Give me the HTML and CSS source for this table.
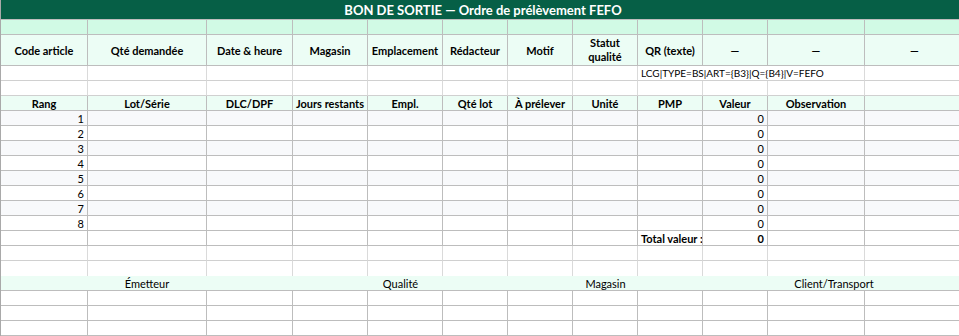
FILE: index.html
```html
<!DOCTYPE html>
<html lang="fr">
<head>
    <meta charset="UTF-8">
    <title>Bon de sortie FEFO</title>
    <link rel="stylesheet" href="styles.css">
</head>
<body>
    <div class="sheet">
        <!-- titre -->
        <div class="cell title">BON DE SORTIE — Ordre de prélèvement FEFO</div>

        <div class="cell band"></div><div class="cell band"></div><div class="cell band"></div><div class="cell band"></div>
        <div class="cell band"></div><div class="cell band"></div><div class="cell band"></div><div class="cell band"></div>
        <div class="cell band"></div><div class="cell band"></div><div class="cell band"></div><div class="cell band"></div>

        <!-- en-tête du bon -->
        <div class="cell head">Code article</div>
        <div class="cell head">Qté demandée</div>
        <div class="cell head">Date &amp; heure</div>
        <div class="cell head">Magasin</div>
        <div class="cell head">Emplacement</div>
        <div class="cell head">Rédacteur</div>
        <div class="cell head">Motif</div>
        <div class="cell head wrap">Statut<br>qualité</div>
        <div class="cell head">QR (texte)</div>
        <div class="cell head">—</div>
        <div class="cell head">—</div>
        <div class="cell head">—</div>

        <div class="cell plain"></div><div class="cell plain"></div><div class="cell plain"></div><div class="cell plain"></div>
        <div class="cell plain"></div><div class="cell plain"></div><div class="cell plain"></div><div class="cell plain"></div>
        <div class="cell plain left qr">LCG|TYPE=BS|ART={B3}|Q={B4}|V=FEFO</div>
        <div class="cell plain"></div>

        <div class="cell plain"></div><div class="cell plain"></div><div class="cell plain"></div><div class="cell plain"></div>
        <div class="cell plain"></div><div class="cell plain"></div><div class="cell plain"></div><div class="cell plain"></div>
        <div class="cell plain"></div><div class="cell plain"></div><div class="cell plain"></div><div class="cell plain"></div>

        <!-- lignes de lots -->
        <div class="cell head">Rang</div>
        <div class="cell head">Lot/Série</div>
        <div class="cell head">DLC/DPF</div>
        <div class="cell head">Jours restants</div>
        <div class="cell head">Empl.</div>
        <div class="cell head">Qté lot</div>
        <div class="cell head">À prélever</div>
        <div class="cell head">Unité</div>
        <div class="cell head">PMP</div>
        <div class="cell head">Valeur</div>
        <div class="cell head">Observation</div>
        <div class="cell head"></div>

        <div class="cell num odd">1</div><div class="cell odd"></div><div class="cell odd"></div><div class="cell odd"></div><div class="cell odd"></div><div class="cell odd"></div><div class="cell odd"></div><div class="cell odd"></div><div class="cell odd"></div><div class="cell num odd">0</div><div class="cell odd"></div><div class="cell odd"></div>
        <div class="cell num">2</div><div class="cell"></div><div class="cell"></div><div class="cell"></div><div class="cell"></div><div class="cell"></div><div class="cell"></div><div class="cell"></div><div class="cell"></div><div class="cell num">0</div><div class="cell"></div><div class="cell"></div>
        <div class="cell num odd">3</div><div class="cell odd"></div><div class="cell odd"></div><div class="cell odd"></div><div class="cell odd"></div><div class="cell odd"></div><div class="cell odd"></div><div class="cell odd"></div><div class="cell odd"></div><div class="cell num odd">0</div><div class="cell odd"></div><div class="cell odd"></div>
        <div class="cell num">4</div><div class="cell"></div><div class="cell"></div><div class="cell"></div><div class="cell"></div><div class="cell"></div><div class="cell"></div><div class="cell"></div><div class="cell"></div><div class="cell num">0</div><div class="cell"></div><div class="cell"></div>
        <div class="cell num odd">5</div><div class="cell odd"></div><div class="cell odd"></div><div class="cell odd"></div><div class="cell odd"></div><div class="cell odd"></div><div class="cell odd"></div><div class="cell odd"></div><div class="cell odd"></div><div class="cell num odd">0</div><div class="cell odd"></div><div class="cell odd"></div>
        <div class="cell num">6</div><div class="cell"></div><div class="cell"></div><div class="cell"></div><div class="cell"></div><div class="cell"></div><div class="cell"></div><div class="cell"></div><div class="cell"></div><div class="cell num">0</div><div class="cell"></div><div class="cell"></div>
        <div class="cell num odd">7</div><div class="cell odd"></div><div class="cell odd"></div><div class="cell odd"></div><div class="cell odd"></div><div class="cell odd"></div><div class="cell odd"></div><div class="cell odd"></div><div class="cell odd"></div><div class="cell num odd">0</div><div class="cell odd"></div><div class="cell odd"></div>
        <div class="cell num">8</div><div class="cell"></div><div class="cell"></div><div class="cell"></div><div class="cell"></div><div class="cell"></div><div class="cell"></div><div class="cell"></div><div class="cell"></div><div class="cell num">0</div><div class="cell"></div><div class="cell"></div>

        <!-- total -->
        <div class="cell"></div><div class="cell"></div><div class="cell"></div><div class="cell"></div><div class="cell"></div><div class="cell"></div><div class="cell"></div><div class="cell"></div>
        <div class="cell left strong">Total valeur :</div>
        <div class="cell num strong">0</div>
        <div class="cell"></div><div class="cell"></div>

        <div class="cell plain"></div><div class="cell plain"></div><div class="cell plain"></div><div class="cell plain"></div>
        <div class="cell plain"></div><div class="cell plain"></div><div class="cell plain"></div><div class="cell plain"></div>
        <div class="cell plain"></div><div class="cell plain"></div><div class="cell plain"></div><div class="cell plain"></div>

        <div class="cell plain open"></div><div class="cell plain open"></div><div class="cell plain open"></div><div class="cell plain open"></div>
        <div class="cell plain open"></div><div class="cell plain open"></div><div class="cell plain open"></div><div class="cell plain open"></div>
        <div class="cell plain open"></div><div class="cell plain open"></div><div class="cell plain open"></div><div class="cell plain open"></div>

        <!-- signatures -->
        <div class="cell sign s1">Émetteur</div>
        <div class="cell sign s2">Qualité</div>
        <div class="cell sign s3">Magasin</div>
        <div class="cell sign s4">Client/Transport</div>

        <div class="cell"></div><div class="cell"></div><div class="cell"></div><div class="cell"></div><div class="cell"></div><div class="cell"></div><div class="cell"></div><div class="cell"></div><div class="cell"></div><div class="cell"></div><div class="cell"></div><div class="cell"></div>
        <div class="cell"></div><div class="cell"></div><div class="cell"></div><div class="cell"></div><div class="cell"></div><div class="cell"></div><div class="cell"></div><div class="cell"></div><div class="cell"></div><div class="cell"></div><div class="cell"></div><div class="cell"></div>
        <div class="cell"></div><div class="cell"></div><div class="cell"></div><div class="cell"></div><div class="cell"></div><div class="cell"></div><div class="cell"></div><div class="cell"></div><div class="cell"></div><div class="cell"></div><div class="cell"></div><div class="cell"></div>
    </div>
</body>
</html>
```

FILE: styles.css
```css
body {
    margin: 0;
    overflow: hidden;
    background: #fff;
    color: #000;
    font-family: Lato, "Liberation Sans", sans-serif;
    font-size: 11px;
}
.sheet {
    display: grid;
    grid-template-columns: 87px 119px 86px 75px 75px 65px 65px 65px 65px 65px 97px 100px;
    grid-template-rows: 20px 15px 31px;
    grid-auto-rows: 15px;
    width: 966px;
    border-left: 1px solid #a9a9a9;
}
.cell {
    box-sizing: border-box;
    display: flex;
    align-items: center;
    justify-content: center;
    border-right: 1px solid #bdbdbd;
    border-bottom: 1px solid #bdbdbd;
    white-space: nowrap;
    overflow: hidden;
}
.title {
    grid-column: 1 / -1;
    border-right: none;
    background: #065f46;
    color: #fff;
    font-size: 13px;
    font-weight: bold;
}
.band {
    background: #d1fae5;
}
.head {
    background: #ecfdf5;
    font-weight: bold;
}
.wrap {
    white-space: normal;
    text-align: center;
    line-height: 14px;
}
.plain {
    border-right-color: #dadada;
    border-bottom-color: #d0d0d0;
}
.open {
    border-bottom: none;
}
.left {
    justify-content: flex-start;
    padding-left: 3px;
}
.num {
    justify-content: flex-end;
    padding-right: 3px;
}
.strong {
    font-weight: bold;
}
.qr {
    grid-column: span 3;
    font-size: 10px;
}
.odd {
    background: #f8f9fb;
}
.sign {
    background: #ecfdf5;
    border-right: none;
}
.s1 { grid-column: 1 / 4; }
.s2 { grid-column: 4 / 7; }
.s3 { grid-column: 7 / 10; }
.s4 { grid-column: 10 / 13; }
```
